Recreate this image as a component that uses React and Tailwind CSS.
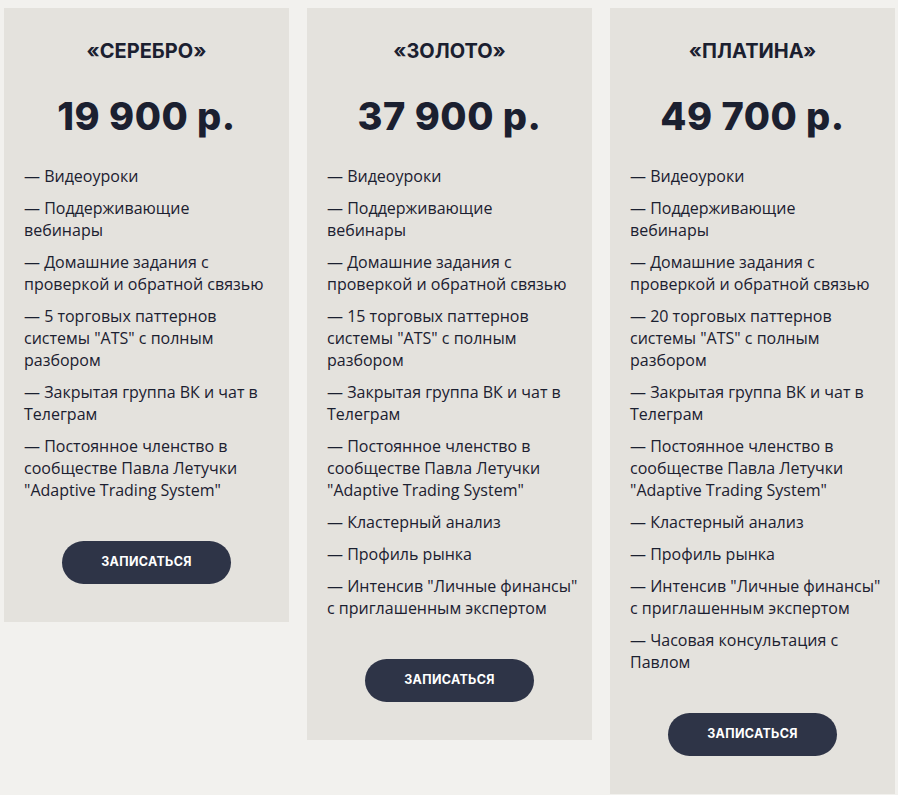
import React from 'react';

const plans = [
    {
        name: '«СЕРЕБРО»',
        price: '19 900 р.',
        items: [
            '— Видеоуроки',
            '— Поддерживающие\nвебинары',
            '— Домашние задания с проверкой и обратной связью',
            '— 5 торговых паттернов системы "ATS" с полным разбором',
            '— Закрытая группа ВК и чат в Телеграм',
            '— Постоянное членство в сообществе Павла Летучки "Adaptive Trading System"',
        ],
    },
    {
        name: '«ЗОЛОТО»',
        price: '37 900 р.',
        items: [
            '— Видеоуроки',
            '— Поддерживающие\nвебинары',
            '— Домашние задания с проверкой и обратной связью',
            '— 15 торговых паттернов системы "ATS" с полным разбором',
            '— Закрытая группа ВК и чат в Телеграм',
            '— Постоянное членство в сообществе Павла Летучки "Adaptive Trading System"',
            '— Кластерный анализ',
            '— Профиль рынка',
            '— Интенсив "Личные финансы" с приглашенным экспертом',
        ],
    },
    {
        name: '«ПЛАТИНА»',
        price: '49 700 р.',
        items: [
            '— Видеоуроки',
            '— Поддерживающие\nвебинары',
            '— Домашние задания с проверкой и обратной связью',
            '— 20 торговых паттернов системы "ATS" с полным разбором',
            '— Закрытая группа ВК и чат в Телеграм',
            '— Постоянное членство в сообществе Павла Летучки "Adaptive Trading System"',
            '— Кластерный анализ',
            '— Профиль рынка',
            '— Интенсив "Личные финансы" с приглашенным экспертом',
            '— Часовая консультация с Павлом',
        ],
    },
];

const PlanCard = ({ plan }) => (
    <div className="flex w-[285px] shrink-0 flex-col bg-[#e4e2dd] pb-[38px] pt-[31px] text-[#1b2030]">
        <div className="text-center font-['Inter',sans-serif] text-[20px] font-bold leading-[24px]">
            {plan.name}
        </div>
        <div className="mt-[30px] text-center font-['Inter',sans-serif] text-[38px] font-extrabold leading-[46px] tracking-[0.5px]">
            {plan.price}
        </div>
        <ul className="mt-[26px] flex flex-col gap-[10px] pl-[20px] pr-[14px] font-['Open_Sans',sans-serif] text-[16px] leading-[22px]">
            {plan.items.map((item) => (
                <li key={item} className="whitespace-pre-line">
                    {item}
                </li>
            ))}
        </ul>
        <div className="mt-[40px] flex justify-center">
            <button className="h-[43px] w-[169px] rounded-full bg-[#2e3447] font-['Inter',sans-serif] text-[12.5px] font-bold tracking-[0.3px] text-white">
                ЗАПИСАТЬСЯ
            </button>
        </div>
    </div>
);

export default function App() {
    return (
        <div className="h-[795px] overflow-hidden bg-[#f2f1ee] pl-[4px] pt-[8px]">
            <div className="flex items-start gap-[18px]">
                {plans.map((plan) => (
                    <PlanCard key={plan.name} plan={plan} />
                ))}
            </div>
        </div>
    );
}
